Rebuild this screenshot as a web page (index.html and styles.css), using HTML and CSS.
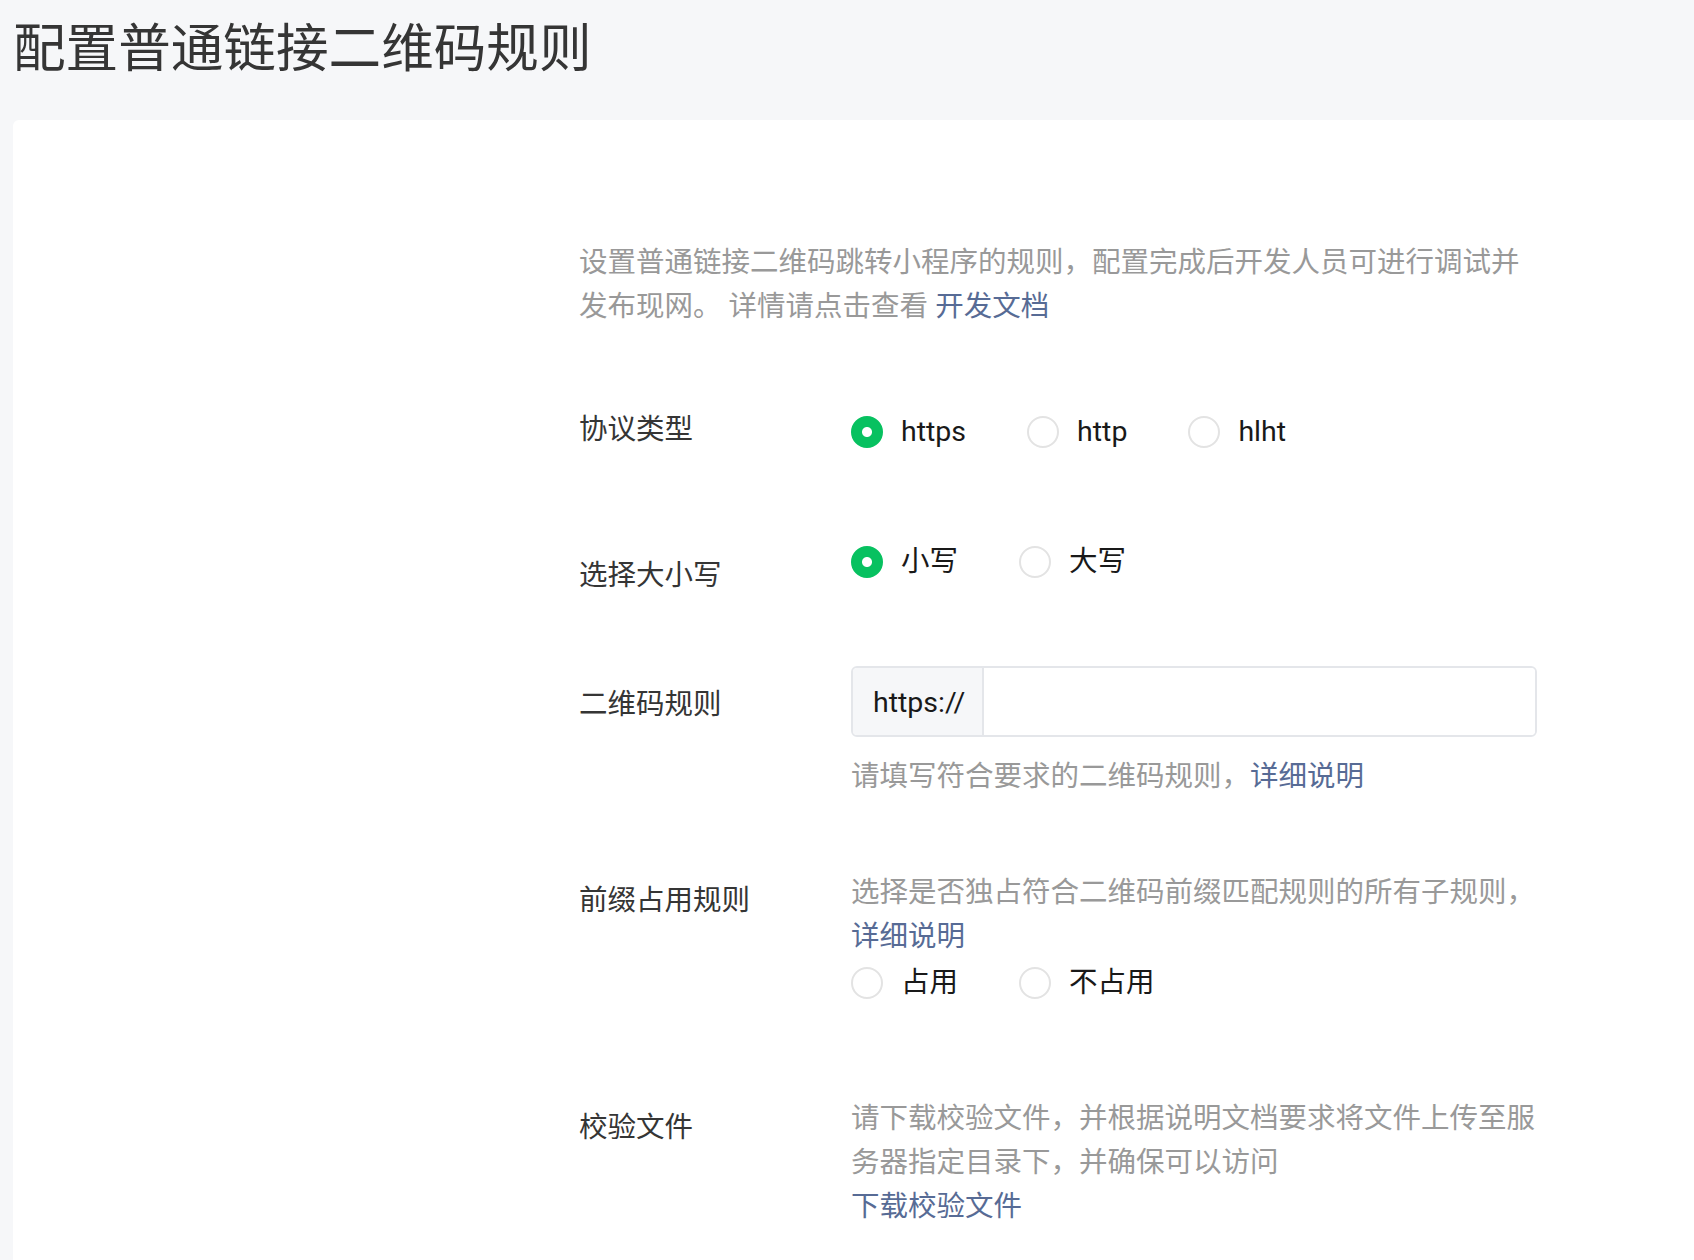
FILE: index.html
```html
<!DOCTYPE html>
<html>
<head>
    <meta charset="utf-8">
    <title>配置普通链接二维码规则</title>
    <link rel="stylesheet" href="styles.css">
</head>
<body>
    <div class="header">
        <h1>配置普通链接二维码规则</h1>
    </div>

    <div class="card">
        <p class="desc">设置普通链接二维码跳转小程序的规则，配置完成后开发人员可进行调试并发布现网。 详情请点击查看 <a href="#">开发文档</a></p>

        <div class="row row-protocol">
            <div class="label">协议类型</div>
            <div class="control">
                <div class="options">
                    <label class="option"><span class="radio checked"></span>https</label>
                    <label class="option"><span class="radio"></span>http</label>
                    <label class="option"><span class="radio"></span>hlht</label>
                </div>
            </div>
        </div>

        <div class="row row-case">
            <div class="label">选择大小写</div>
            <div class="control">
                <div class="options">
                    <label class="option"><span class="radio checked"></span>小写</label>
                    <label class="option"><span class="radio"></span>大写</label>
                </div>
            </div>
        </div>

        <div class="row row-rule">
            <div class="label">二维码规则</div>
            <div class="control">
                <div class="input-group">
                    <span class="prefix">https://</span>
                    <input class="input" type="text">
                </div>
                <p class="hint">请填写符合要求的二维码规则，<a href="#">详细说明</a></p>
            </div>
        </div>

        <div class="row row-prefix">
            <div class="label">前缀占用规则</div>
            <div class="control">
                <p class="hint">选择是否独占符合二维码前缀匹配规则的所有子规则，<a href="#">详细说明</a></p>
                <div class="options">
                    <label class="option"><span class="radio"></span>占用</label>
                    <label class="option"><span class="radio"></span>不占用</label>
                </div>
            </div>
        </div>

        <div class="row row-file">
            <div class="label">校验文件</div>
            <div class="control">
                <p class="hint">请下载校验文件，并根据说明文档要求将文件上传至服务器指定目录下，并确保可以访问</p>
                <a class="block-link" href="#">下载校验文件</a>
            </div>
        </div>
    </div>
</body>
</html>
```

FILE: styles.css
```css
body { margin: 0; background: #f6f7f9; font-family: Roboto, "Noto Sans CJK SC", sans-serif; font-size: 28.5px; color: #353535; overflow: hidden; }
a { color: #576b95; text-decoration: none; }

.header { height: 120px; box-sizing: border-box; padding: 12px 0 0 13px; }
.header h1 { margin: 0; font-size: 52.6px; font-weight: normal; line-height: 74px; color: #353535; }

.card { margin-left: 13px; background: #fff; border-radius: 6px 0 0 0; min-height: 1140px; box-sizing: border-box; padding: 121px 0 0 566px; }

.desc { width: 957px; margin: 0; line-height: 44px; color: #999; }

.row { display: flex; align-items: flex-start; }
.label { width: 272px; flex: none; line-height: 44px; color: #353535; }
.control { width: 686px; }

.options { display: flex; align-items: center; height: 44px; }
.option { display: flex; align-items: center; margin-right: 61px; color: #191919; line-height: 44px; }
.radio { width: 32px; height: 32px; box-sizing: border-box; border: 2px solid #e3e3e3; border-radius: 50%; margin-right: 18px; background: #fff; }
.radio.checked { border-color: #07c160; background: radial-gradient(circle, #fff 0 4.5px, #07c160 5.5px); }

.input-group { display: flex; height: 71px; box-sizing: border-box; border: 2px solid #e4e6ea; border-radius: 6px; overflow: hidden; }
.prefix { width: 131px; flex: none; box-sizing: border-box; padding-left: 20px; background: #f6f7f9; border-right: 2px solid #e4e6ea; line-height: 69px; color: #191919; }
.input { flex: 1; border: 0; outline: none; font: inherit; padding: 0 16px; background: #fff; }

.hint { margin: 0; line-height: 44px; color: #999; }
.block-link { display: block; line-height: 44px; }

.row-protocol { margin-top: 81px; }
.row-protocol .label { margin-top: -2px; }
.row-case { margin-top: 86px; }
.row-case .label { margin-top: 14px; }
.row-rule { margin-top: 68px; }
.row-rule .label { padding-top: 17px; }
.row-rule .hint { margin-top: 18px; }
.row-prefix { margin-top: 72px; }
.row-prefix .label { margin-top: 8px; }
.row-prefix .options { margin-top: 2px; }
.row-file { margin-top: 92px; }
.row-file .label { margin-top: 9px; }
```
